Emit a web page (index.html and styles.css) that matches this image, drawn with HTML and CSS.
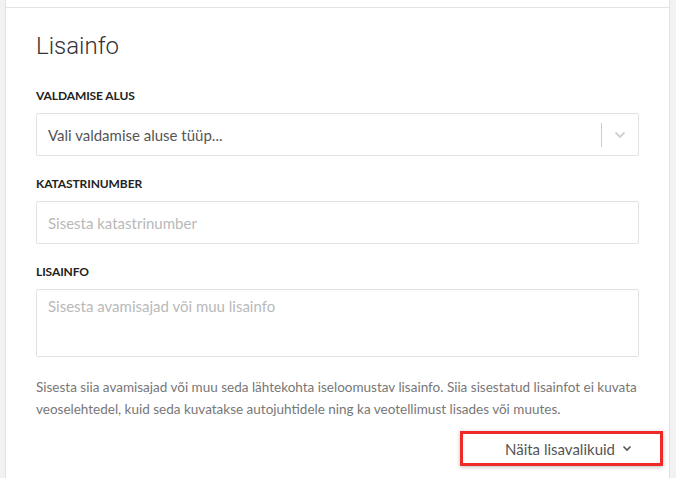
FILE: index.html
```html
<!DOCTYPE html>
<html lang="et">
<head>
<meta charset="utf-8">
<link rel="stylesheet" href="styles.css">
</head>
<body>
<div class="page">
  <div class="prev-card"></div>
  <div class="card">
    <h2 class="title">Lisainfo</h2>
    <div class="field">
      <label class="label">Valdamise alus</label>
      <div class="select">
        <span class="select-value">Vali valdamise aluse tüüp...</span>
        <span class="select-sep"></span>
        <span class="select-arrow">
          <svg width="12" height="8" viewBox="0 0 12 8"><path d="M1.5 1.5 L6 6 L10.5 1.5" fill="none" stroke="#cfcfcf" stroke-width="1.8"/></svg>
        </span>
      </div>
    </div>
    <div class="field">
      <label class="label">Katastrinumber</label>
      <div class="input"><span class="placeholder">Sisesta katastrinumber</span></div>
    </div>
    <div class="field">
      <label class="label">Lisainfo</label>
      <div class="input textarea"><span class="placeholder">Sisesta avamisajad või muu lisainfo</span></div>
    </div>
    <p class="help">Sisesta siia avamisajad või muu seda lähtekohta iseloomustav lisainfo. Siia sisestatud lisainfot ei kuvata veoselehtedel, kuid seda kuvatakse autojuhtidele ning ka veotellimust lisades või muutes.</p>
    <div class="actions">
      <button class="more">Näita lisavalikuid
        <svg width="10" height="7" viewBox="0 0 10 7"><path d="M1.5 1.5 L5 5 L8.5 1.5" fill="none" stroke="#555" stroke-width="1.6"/></svg>
      </button>
    </div>
  </div>
</div>
</body>
</html>
```

FILE: styles.css
```css
html, body {
  margin: 0;
  padding: 0;
  background: #f2f2f2;
  height: 100%;
}
.page {
  margin: 0 6px 0 5px;
  border-left: 1px solid #e2e2e2;
  border-right: 1px solid #e2e2e2;
  background: #fff;
  min-height: 478px;
  overflow: hidden;
}
.prev-card {
  height: 7px;
  border-bottom: 1px solid #e4e4e4;
}
.card {
  padding: 0 30px 0 30px;
  font-family: Lato, "Noto Sans", sans-serif;
}
.title {
  font-family: Roboto, sans-serif;
  font-weight: 300;
  font-size: 24px;
  line-height: 30px;
  color: #333;
  margin: 0;
  padding-top: 23px;
}
.title + .field {
  margin-top: 27px;
}
.label {
  display: block;
  font-weight: 700;
  font-size: 12px;
  line-height: 16px;
  letter-spacing: -0.1px;
  text-transform: uppercase;
  color: #222;
  margin-bottom: 9px;
}
.select, .input {
  box-sizing: border-box;
  border: 1px solid #e2e2e2;
  border-radius: 2px;
  height: 43px;
  display: flex;
  align-items: center;
  padding: 0 11px;
  font-size: 15px;
  margin-bottom: 20px;
}
.select {
  padding-right: 0;
}
.select-value {
  flex: 1;
  color: #555;
}
.select-sep {
  width: 1px;
  height: 24px;
  background: #ccc;
}
.select-arrow {
  width: 36px;
  display: flex;
  justify-content: center;
  align-items: center;
}
.placeholder {
  color: #b9b9b9;
}
.textarea {
  height: 68px;
  align-items: flex-start;
  padding-top: 7px;
  margin-bottom: 19px;
}
.help {
  margin: 0;
  font-size: 13.5px;
  line-height: 22px;
  color: #777;
}
.actions {
  display: flex;
  justify-content: flex-end;
  margin-top: 11px;
  margin-right: -24px;
}
.more {
  box-sizing: border-box;
  width: 203px;
  height: 35px;
  border: 3px solid #f02a26;
  background: #fff;
  box-shadow: 0 1px 4px rgba(0,0,0,0.25);
  font-family: Lato, sans-serif;
  font-size: 15px;
  color: #555;
  display: flex;
  align-items: center;
  justify-content: flex-end;
  gap: 7px;
  padding: 0 28px 0 0;
  cursor: pointer;
}
```
